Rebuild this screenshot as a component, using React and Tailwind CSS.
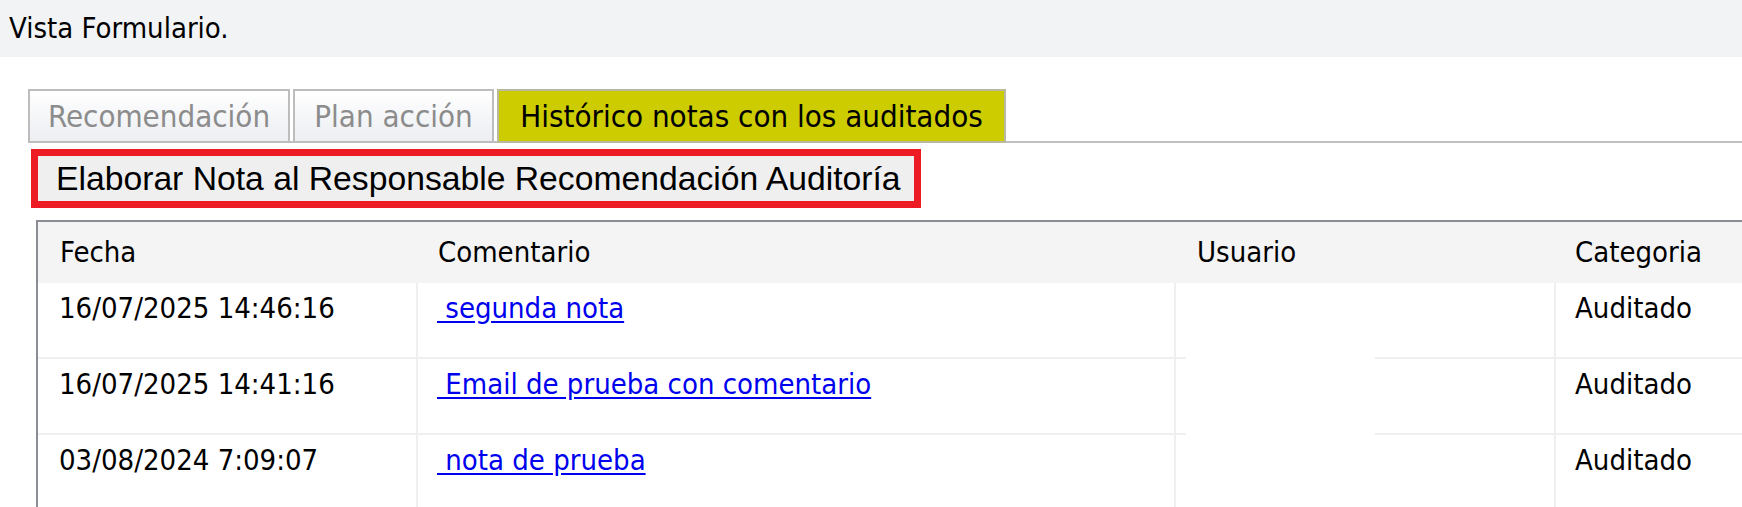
import React from 'react';

const notas = [
    { fecha: '16/07/2025 14:46:16', comentario: 'segunda nota', usuario: '', categoria: 'Auditado' },
    { fecha: '16/07/2025 14:41:16', comentario: 'Email de prueba con comentario', usuario: '', categoria: 'Auditado' },
    { fecha: '03/08/2024 7:09:07', comentario: 'nota de prueba', usuario: '', categoria: 'Auditado' },
];

const tabs = [
    { label: 'Recomendación', width: 'w-[262px]', active: false },
    { label: 'Plan acción', width: 'w-[201px]', active: false },
    { label: 'Histórico notas con los auditados', width: 'w-[509px]', active: true },
];

const App = () => {
    return (
        <div className="w-full min-h-screen bg-white overflow-hidden font-['DejaVu_Sans_Condensed','DejaVu_Sans',sans-serif] text-black">
            <div className="h-[57px] bg-[#f2f3f5] flex items-center pl-[9px] text-[29px]">
                Vista Formulario.
            </div>

            {/* tabs */}
            <div className="mt-[32px] ml-[28px] flex items-end gap-[3px] border-b-2 border-[#c0c0c0]">
                {tabs.map(t => (
                    <div
                        key={t.label}
                        className={
                            t.active
                                ? `${t.width} h-[54px] -mb-[2px] flex items-center justify-center border-2 border-[#b9b9a0] bg-[#cccc00] text-[31px] text-black`
                                : `${t.width} h-[54px] -mb-[2px] flex items-center justify-center border-2 border-[#bdbdbd] bg-gradient-to-b from-white to-[#eceef2] text-[31px] text-[#8c8c8c]`
                        }
                    >
                        {t.label}
                    </div>
                ))}
            </div>

            <div className="mt-[6px] ml-[31px] w-[890px] h-[59px] border-[7px] border-[#ed1c24] bg-[#efefef] flex items-center pl-[18px] font-['Liberation_Sans',Arial,sans-serif] text-[33.7px] text-black">
                Elaborar Nota al Responsable Recomendación Auditoría
            </div>

            {/* tabla */}
            <div className="mt-[12px] ml-[36px] w-[1800px] border-l-2 border-t-2 border-[#8a8d93] text-[29px]">
                <div className="flex h-[61px] bg-[#f4f4f4] items-center">
                    <div className="w-[380px] pl-[22px]">Fecha</div>
                    <div className="w-[758px] pl-[20px]">Comentario</div>
                    <div className="w-[380px] pl-[21px]">Usuario</div>
                    <div className="flex-1 pl-[19px]">Categoria</div>
                </div>
                {notas.map((n, i) => (
                    <div key={i} className="flex h-[76px]">
                        <div className="w-[380px] pl-[21px] pt-[9px] leading-[33px] border-r-2 border-b-2 border-[#efefef]">{n.fecha}</div>
                        <div className="w-[758px] pl-[19px] pt-[9px] leading-[33px] border-r-2 border-b-2 border-[#efefef]">
                            <a href="#" className="text-[#0000ee] underline underline-offset-[3px]">{'\u00a0' + n.comentario}</a>
                        </div>
                        <div className="w-[380px] flex flex-col justify-between border-r-2 border-[#efefef]">
                            <div className="pl-[21px] pt-[9px] leading-[33px]">{n.usuario}</div>
                            <div className="flex h-[2px]">
                                <div className="w-[10px] bg-[#efefef]" />
                                <div className="w-[189px]" />
                                <div className="flex-1 bg-[#efefef]" />
                            </div>
                        </div>
                        <div className="flex-1 pl-[19px] pt-[9px] leading-[33px] border-b-2 border-[#efefef]">{n.categoria}</div>
                    </div>
                ))}
            </div>
        </div>
    );
};

export default App;
